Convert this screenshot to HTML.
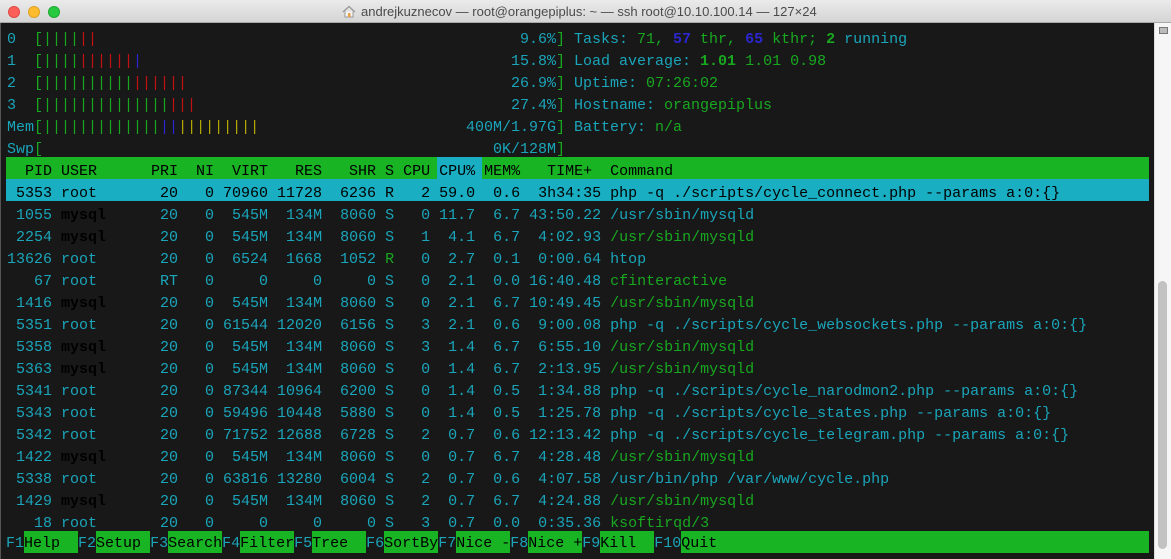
<!DOCTYPE html>
<html><head><meta charset="utf-8"><style>
*{margin:0;padding:0;box-sizing:border-box}
body{width:1171px;height:559px;overflow:hidden;background:#181818;position:relative;font-family:"Liberation Mono",monospace;font-size:15px;color:#1aa5ba}
#tb{position:absolute;left:0;top:0;width:1171px;height:23px;background:linear-gradient(#ebebeb,#d5d5d5);border-bottom:1px solid #a8a8a8;font-family:"Liberation Sans",sans-serif;font-size:13px;color:#4a4a4a}
.dot{position:absolute;top:6px;width:12px;height:12px;border-radius:50%}
#title{position:absolute;left:361px;top:4px;white-space:pre}
#term{position:absolute;left:0;top:23px;width:1154px;height:536px;background:#181818;border-left:1px solid #555}
#sb{position:absolute;left:1154px;top:23px;width:17px;height:536px;background:#f6f6f6;border-left:1px solid #ddd}
.row{position:absolute;left:7px;height:22px;line-height:22px;white-space:pre;padding-top:4px}
.bar{position:absolute;left:6px;width:1143px;height:22px}
.g{color:#18a820}.b{color:#2b26d0}.r{color:#c01212}.y{color:#b4a800}.w{color:#1aa5ba}.k{color:#000}.bk{color:#000;font-weight:bold}.bd{font-weight:bold}
.pct{position:absolute;left:0;width:549px;text-align:right}
.sel,.sel span{color:#000!important}
.fk{color:#1aa5ba}.fl{background:#19b424;color:#000;display:inline-block;height:22px;padding-top:3px;vertical-align:top}
.fk{display:inline-block;height:22px;padding-top:3px;vertical-align:top}
</style></head><body>
<div id="tb">
<div class="dot" style="left:8px;background:#fc5f57;border:1px solid #de4a43"></div>
<div class="dot" style="left:28px;background:#fdbc2e;border:1px solid #dea124"></div>
<div class="dot" style="left:48px;background:#28c840;border:1px solid #1ea931"></div>
<svg style="position:absolute;left:342px;top:5px" width="14" height="13" viewBox="0 0 14 13"><path d="M1 7 L7 1.5 L13 7" fill="none" stroke="#999" stroke-width="1.3"/><path d="M3 6.5 V12 H11 V6.5" fill="#f3f3f3" stroke="#999"/><rect x="6" y="8" width="2.5" height="4" fill="#e8a040"/></svg>
<div id="title">andrejkuznecov — root@orangepiplus: ~ — ssh root@10.10.100.14 — 127×24</div>
</div>
<div id="term"></div>
<div id="sb"><div style="position:absolute;left:4px;top:4px;width:9px;height:7px;border:1px solid #777;background:#bbb"></div><div style="position:absolute;left:3px;top:258px;width:9px;height:268px;border-radius:5px;background:#c2c2c2"></div></div>

<div class="row" style="top:25px">0  <span class="g">[</span><span class="g">||||</span><span class="r">||</span><span class="pct">9.6%</span><span style="position:absolute;left:549px" class="g">]</span><span style="position:absolute;left:567px">Tasks: <span class="g">71, </span><span class="b bd">57</span><span class="g"> thr, </span><span class="b bd">65</span><span class="g"> kthr; </span><span class="g bd">2</span> running</span></div>
<div class="row" style="top:47px">1  <span class="g">[||||</span><span class="r">||||||</span><span class="b">|</span><span class="pct">15.8%</span><span style="position:absolute;left:549px" class="g">]</span><span style="position:absolute;left:567px">Load average: <span class="g bd">1.01</span> <span class="g">1.01 0.98</span></span></div>
<div class="row" style="top:69px">2  <span class="g">[||||||||||</span><span class="r">||||||</span><span class="pct">26.9%</span><span style="position:absolute;left:549px" class="g">]</span><span style="position:absolute;left:567px">Uptime: <span class="g">07:26:02</span></span></div>
<div class="row" style="top:91px">3  <span class="g">[||||||||||||||</span><span class="r">|||</span><span class="pct">27.4%</span><span style="position:absolute;left:549px" class="g">]</span><span style="position:absolute;left:567px">Hostname: <span class="g">orangepiplus</span></span></div>
<div class="row" style="top:113px">Mem<span class="g">[|||||||||||||</span><span class="b">||</span><span class="y">|||||||||</span><span class="pct">400M/1.97G</span><span style="position:absolute;left:549px" class="g">]</span><span style="position:absolute;left:567px">Battery: <span class="g">n/a</span></span></div>
<div class="row" style="top:135px">Swp<span class="g">[</span><span class="pct">0K/128M</span><span style="position:absolute;left:549px" class="g">]</span></div>

<div class="bar" style="top:157px;background:#19b424"></div>
<div class="bar" style="top:157px;left:437px;width:45px;background:#1aaec2"></div>
<div class="row k" style="top:157px">  PID USER      PRI  NI  VIRT   RES   SHR S CPU CPU% MEM%   TIME+  Command</div>
<div class="bar" style="top:179px;background:#1aaec2"></div>
<div class="row sel" style="top:179px"> 5353 root       20   0 70960 11728  6236 R   2 59.0  0.6  3h34:35 php -q ./scripts/cycle_connect.php --params a:0:{}</div>
<div class="row" style="top:201px"> 1055 <span class="bk">mysql</span>      20   0  545M  134M  8060 S   0 11.7  6.7 43:50.22 /usr/sbin/mysqld</div>
<div class="row" style="top:223px"> 2254 <span class="bk">mysql</span>      20   0  545M  134M  8060 S   1  4.1  6.7  4:02.93 <span class="g">/usr/sbin/mysqld</span></div>
<div class="row" style="top:245px">13626 root       20   0  6524  1668  1052 <span class="g">R</span>   0  2.7  0.1  0:00.64 htop</div>
<div class="row" style="top:267px">   67 root       RT   0     0     0     0 S   0  2.1  0.0 16:40.48 <span class="g">cfinteractive</span></div>
<div class="row" style="top:289px"> 1416 <span class="bk">mysql</span>      20   0  545M  134M  8060 S   0  2.1  6.7 10:49.45 <span class="g">/usr/sbin/mysqld</span></div>
<div class="row" style="top:311px"> 5351 root       20   0 61544 12020  6156 S   3  2.1  0.6  9:00.08 php -q ./scripts/cycle_websockets.php --params a:0:{}</div>
<div class="row" style="top:333px"> 5358 <span class="bk">mysql</span>      20   0  545M  134M  8060 S   3  1.4  6.7  6:55.10 <span class="g">/usr/sbin/mysqld</span></div>
<div class="row" style="top:355px"> 5363 <span class="bk">mysql</span>      20   0  545M  134M  8060 S   0  1.4  6.7  2:13.95 <span class="g">/usr/sbin/mysqld</span></div>
<div class="row" style="top:377px"> 5341 root       20   0 87344 10964  6200 S   0  1.4  0.5  1:34.88 php -q ./scripts/cycle_narodmon2.php --params a:0:{}</div>
<div class="row" style="top:399px"> 5343 root       20   0 59496 10448  5880 S   0  1.4  0.5  1:25.78 php -q ./scripts/cycle_states.php --params a:0:{}</div>
<div class="row" style="top:421px"> 5342 root       20   0 71752 12688  6728 S   2  0.7  0.6 12:13.42 php -q ./scripts/cycle_telegram.php --params a:0:{}</div>
<div class="row" style="top:443px"> 1422 <span class="bk">mysql</span>      20   0  545M  134M  8060 S   0  0.7  6.7  4:28.48 <span class="g">/usr/sbin/mysqld</span></div>
<div class="row" style="top:465px"> 5338 root       20   0 63816 13280  6004 S   2  0.7  0.6  4:07.58 /usr/bin/php /var/www/cycle.php</div>
<div class="row" style="top:487px"> 1429 <span class="bk">mysql</span>      20   0  545M  134M  8060 S   2  0.7  6.7  4:24.88 <span class="g">/usr/sbin/mysqld</span></div>
<div class="row" style="top:509px">   18 root       20   0     0     0     0 S   3  0.7  0.0  0:35.36 <span class="g">ksoftirqd/3</span></div>
<div class="bar" style="top:531px;left:710px;width:439px;background:#19b424"></div>
<div class="row" style="top:531px;left:6px;padding-top:0;line-height:20px"><span class="fk">F1</span><span class="fl">Help  </span><span class="fk">F2</span><span class="fl">Setup </span><span class="fk">F3</span><span class="fl">Search</span><span class="fk">F4</span><span class="fl">Filter</span><span class="fk">F5</span><span class="fl">Tree  </span><span class="fk">F6</span><span class="fl">SortBy</span><span class="fk">F7</span><span class="fl">Nice -</span><span class="fk">F8</span><span class="fl">Nice +</span><span class="fk">F9</span><span class="fl">Kill  </span><span class="fk">F10</span><span class="fl">Quit</span></div>
</body></html>
